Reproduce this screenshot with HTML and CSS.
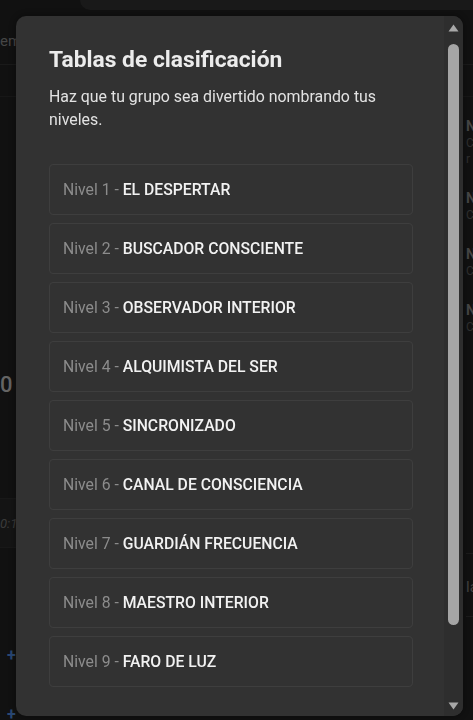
FILE: index.html
```html
<!DOCTYPE html>
<html lang="es">
<head>
<meta charset="utf-8">
<title>Tablas de clasificación</title>
<link rel="stylesheet" href="styles.css">
</head>
<body>
<div class="page">
  <div class="topbar"></div>
  <div class="tabs"><span class="tab-text">em</span></div>
  <div class="subbar"></div>
  <div class="main">
    <div class="left-col">
      <div class="big-num">0</div>
      <div class="band"><span class="time">0:1</span></div>
      <div class="plus plus-1">+</div>
      <div class="plus plus-2">+</div>
    </div>
    <div class="right-col">
      <div class="member"><div class="m-name">N</div><div class="m-sub">C</div><div class="m-sub">r</div></div>
      <div class="member"><div class="m-name">N</div><div class="m-sub">C</div></div>
      <div class="member"><div class="m-name">N</div><div class="m-sub">C</div></div>
      <div class="member"><div class="m-name">N</div><div class="m-sub">C</div></div>
      <div class="r-line"></div>
      <div class="r-text">la</div>
      <div class="r-line r-line-2"></div>
    </div>
  </div>
</div>

<div class="overlay"></div>

<div class="modal">
  <div class="modal-body">
    <h1 class="modal-title">Tablas de clasificación</h1>
    <p class="modal-desc">Haz que tu grupo sea divertido nombrando tus niveles.</p>
    <ul class="levels">
      <li class="level"><span class="level-num">Nivel 1 - </span><span class="level-name">EL DESPERTAR</span></li>
      <li class="level"><span class="level-num">Nivel 2 - </span><span class="level-name">BUSCADOR CONSCIENTE</span></li>
      <li class="level"><span class="level-num">Nivel 3 - </span><span class="level-name">OBSERVADOR INTERIOR</span></li>
      <li class="level"><span class="level-num">Nivel 4 - </span><span class="level-name">ALQUIMISTA DEL SER</span></li>
      <li class="level"><span class="level-num">Nivel 5 - </span><span class="level-name">SINCRONIZADO</span></li>
      <li class="level"><span class="level-num">Nivel 6 - </span><span class="level-name">CANAL DE CONSCIENCIA</span></li>
      <li class="level"><span class="level-num">Nivel 7 - </span><span class="level-name">GUARDIÁN FRECUENCIA</span></li>
      <li class="level"><span class="level-num">Nivel 8 - </span><span class="level-name">MAESTRO INTERIOR</span></li>
      <li class="level"><span class="level-num">Nivel 9 - </span><span class="level-name">FARO DE LUZ</span></li>
    </ul>
  </div>
  <div class="scrollbar">
    <svg class="arrow" width="11" height="8" viewBox="0 0 11 8"><path d="M5.5 0.5 L10.5 7.5 L0.5 7.5 Z" fill="#a8a8a8"/></svg>
    <div class="track"><div class="thumb"></div></div>
    <svg class="arrow" width="11" height="8" viewBox="0 0 11 8"><path d="M0.5 0.5 L10.5 0.5 L5.5 7.5 Z" fill="#a8a8a8"/></svg>
  </div>
</div>
</body>
</html>
```

FILE: styles.css
```css
* { box-sizing: border-box; }

html, body {
  margin: 0;
  padding: 0;
  height: 720px;
  overflow: hidden;
}

body {
  background: #121212;
  font-family: Roboto, "Liberation Sans", sans-serif;
  color: #e6e6e6;
}

/* ---------- dimmed background page ---------- */
.page {
  height: 720px;
}

.topbar {
  height: 10px;
  margin-left: 80px;
  background: #1b1b1b;
  border-bottom-left-radius: 10px;
}

.tabs {
  height: 55px;
  border-bottom: 1px solid #1c1c1c;
  display: flex;
  align-items: center;
}

.tab-text {
  font-size: 15px;
  color: #4a4a4a;
  padding-top: 8px;
}

.subbar {
  height: 32px;
  border-bottom: 1px solid #191919;
}

.main {
  display: flex;
  justify-content: space-between;
}

.left-col {
  width: 16px;
  display: flex;
  flex-direction: column;
}

.big-num {
  font-size: 22px;
  font-weight: 500;
  color: #6a6a6a;
  margin-top: 276px;
  line-height: 24px;
}

.band {
  margin-top: 101px;
  height: 50px;
  background: #161616;
  border-top: 1px solid #1a1a1a;
  border-bottom: 1px solid #1a1a1a;
  display: flex;
  align-items: center;
}

.time {
  font-style: italic;
  font-size: 13px;
  color: #3e3e3e;
}

.plus {
  color: #2c4c7a;
  font-size: 16px;
  font-weight: 700;
  margin-left: 7px;
  line-height: 16px;
}

.plus-1 { margin-top: 100px; }
.plus-2 { margin-top: 43px; }

.right-col {
  width: 7px;
  display: flex;
  flex-direction: column;
  padding-top: 20px;
}

.member {
  margin-bottom: 22px;
}

.m-name {
  font-size: 14px;
  font-weight: 700;
  color: #4a4a4a;
  line-height: 18px;
}

.m-sub {
  font-size: 12px;
  color: #333;
  line-height: 16px;
}

.r-line {
  margin-top: 196px;
  height: 1px;
  background: #1e1e1e;
}

.r-line-2 {
  margin-top: 20px;
}

.r-text {
  margin-top: 24px;
  font-size: 15px;
  color: #454545;
}

/* ---------- overlay ---------- */
.overlay {
  position: fixed;
  inset: 0;
  background: rgba(0, 0, 0, 0.05);
}

/* ---------- modal ---------- */
.modal {
  position: fixed;
  left: 16px;
  top: 16px;
  width: 447px;
  height: 700px;
  background: #323232;
  border-radius: 10px;
  display: flex;
  overflow: hidden;
  box-shadow: 0 0 8px rgba(0,0,0,0.4);
}

.modal-body {
  flex: 1;
  padding: 30px 31px 0 33px;
}

.modal-title {
  margin: 0;
  font-size: 22.8px;
  line-height: 28px;
  font-weight: 700;
  color: #ececec;
}

.modal-desc {
  margin: 11px 0 0;
  font-size: 15.9px;
  line-height: 23px;
  color: #e2e2e2;
  padding-right: 10px;
}

.levels {
  list-style: none;
  margin: 33px 0 0;
  padding: 0;
  display: flex;
  flex-direction: column;
  gap: 8px;
}

.level {
  height: 51px;
  border: 1px solid #3e3e3e;
  border-radius: 4px;
  display: flex;
  align-items: center;
  padding-left: 13px;
  font-size: 15.75px;
  white-space: pre;
}

.level-num {
  color: #8c8c8c;
}

.level-name {
  color: #f2f2f2;
  font-weight: 500;
}

/* ---------- fake scrollbar ---------- */
.scrollbar {
  width: 19px;
  background: #2e2e2e;
  display: flex;
  flex-direction: column;
  align-items: center;
  padding: 8px 0 6px;
}

.arrow {
  display: block;
  flex: none;
}

.track {
  flex: 1;
  width: 100%;
  padding: 12px 4px 0;
  display: flex;
  flex-direction: column;
}

.thumb {
  height: 581px;
  width: 11px;
  background: #a5a5a5;
  border-radius: 6px;
}
```
